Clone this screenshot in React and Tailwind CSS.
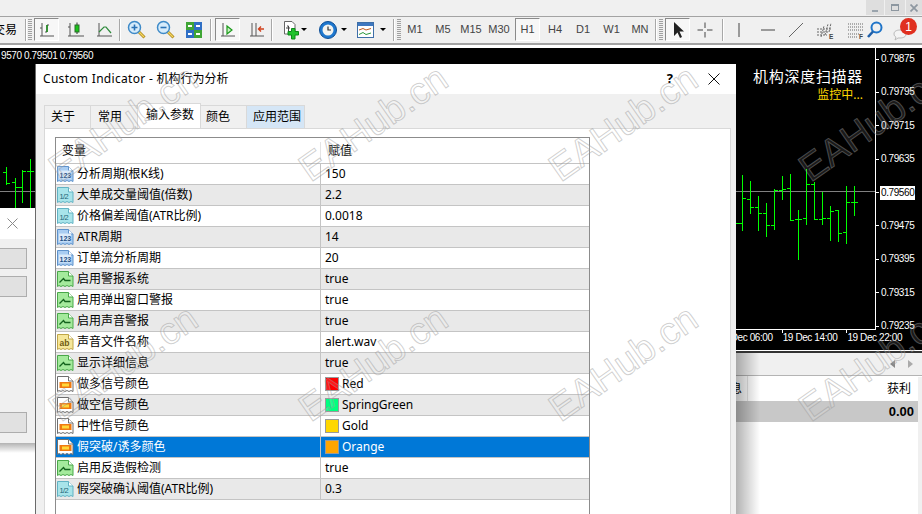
import React from "react";

const cjk = "font-['Noto_Sans','Noto_Sans_CJK_SC',sans-serif]";
const small = "font-['Liberation_Sans',sans-serif] text-[10px] tracking-[-0.4px] leading-[14px] whitespace-nowrap";

const params = [
  ["int", "分析周期(根K线)", "150"],
  ["dbl", "大单成交量阈值(倍数)", "2.2"],
  ["dbl", "价格偏差阈值(ATR比例)", "0.0018"],
  ["int", "ATR周期", "14"],
  ["int", "订单流分析周期", "20"],
  ["bool", "启用警报系统", "true"],
  ["bool", "启用弹出窗口警报", "true"],
  ["bool", "启用声音警报", "true"],
  ["str", "声音文件名称", "alert.wav"],
  ["bool", "显示详细信息", "true"],
  ["color", "做多信号颜色", "Red", "bg-[#ff0000]"],
  ["color", "做空信号颜色", "SpringGreen", "bg-[#00ff7f]"],
  ["color", "中性信号颜色", "Gold", "bg-[#ffd700]"],
  ["color", "假突破/诱多颜色", "Orange", "bg-[#ffa500]"],
  ["bool", "启用反造假检测", "true"],
  ["dbl", "假突破确认阈值(ATR比例)", "0.3"],
];

const prices = ["0.79875", "0.79795", "0.79715", "0.79635", "0.79560", "0.79475", "0.79395", "0.79315", "0.79235"];

// x, high, low, open, close
const bars = [
  [742, 175, 231, 223, 198],
  [750, 181, 214, 199, 207],
  [758, 196, 231, 207, 213],
  [766, 203, 237, 213, 225],
  [774, 189, 230, 225, 190],
  [782, 176, 200, 190, 189],
  [790, 174, 221, 188, 220],
  [798, 210, 260, 219, 219],
  [806, 169, 225, 218, 184],
  [814, 182, 220, 184, 219],
  [822, 192, 225, 219, 218],
  [830, 206, 241, 218, 211],
  [838, 210, 242, 210, 233],
  [846, 186, 244, 232, 202],
  [854, 186, 216, 202, 202],
  [6, 167, 185, 172, 183],
  [15, 178, 208, 182, 187],
  [22, 170, 203, 187, 171],
  [30, 159, 208, 171, 171],
];

const watermarks = [
  "left-[28px] top-[100px]",
  "left-[278px] top-[100px]",
  "left-[528px] top-[100px]",
  "left-[778px] top-[100px]",
  "left-[28px] top-[340px]",
  "left-[278px] top-[340px]",
  "left-[528px] top-[340px]",
  "left-[778px] top-[340px]",
];

function ParamIcon({ type }) {
  const look = {
    int: ["#a9cdf2", "#5f93cc"],
    dbl: ["#a8e4ea", "#62b3c4"],
    bool: ["#a4ea9c", "#4aa84a"],
    str: ["#f6e79a", "#c0a648"],
    color: ["#ffffff", "#6f6f6f"],
  }[type];
  return (
    <svg width="17" height="17" viewBox="0 0 17 17" className="shrink-0">
      <path
        d="M.5 .5H11.5L16 5V15.5L14 14.5 12 15.5 10 14.5 8 15.5 6 14.5 4 15.5 2 14.5 .5 15.5Z"
        fill={look[0]}
        stroke={look[1]}
      />
      <path d="M11.5 .5V5H16" fill="#fff" stroke={look[1]} />
      {type === "int" && (
        <>
          <rect x="2" y="4.5" width="12" height="8" fill="#dcebfa" />
          <text x="2.5" y="11.5" fontSize="7" fontWeight="700" fill="#1d4f86" fontFamily="Liberation Sans">123</text>
        </>
      )}
      {type === "dbl" && (
        <text x="2.5" y="11.5" fontSize="7.5" letterSpacing="-0.6" fill="#1d6478" fontFamily="Liberation Sans">1/2</text>
      )}
      {type === "bool" && <path d="M2.5 11.5L6.5 7.5 8 9.5H13.5" fill="none" stroke="#14641e" strokeWidth="1.3" />}
      {type === "str" && <text x="2.5" y="11.5" fontSize="8.5" fontWeight="700" fill="#6e5a10" fontFamily="Liberation Sans">ab</text>}
      {type === "color" && (
        <>
          <rect x="2.5" y="6" width="12" height="6" fill="#f07a10" />
          <rect x="5" y="7.5" width="7" height="3" fill="#ffd83a" />
        </>
      )}
    </svg>
  );
}

function Separator() {
  return <div className="w-[2px] h-[22px] shrink-0 bg-[#a8a8a8] border-r border-white" />;
}

function Handle() {
  return <div className="w-[4px] h-[22px] shrink-0 bg-[repeating-linear-gradient(#a0a0a0_0_1px,#f0f0f0_1px_2px)]" />;
}

function Tool({ className, checked, children }) {
  return (
    <div
      className={`${className} h-[23px] shrink-0 flex items-center justify-center ${
        checked ? "border border-t-[#8a8a8a] border-l-[#8a8a8a] border-r-white border-b-white bg-[#f7f7f7]" : ""
      }`}
    >
      {children}
    </div>
  );
}

function Caret() {
  return <div className="ml-auto mr-[1px] w-0 h-0 border-x-[3px] border-x-transparent border-t-[3px] border-t-black" />;
}

function Glyph({ children }) {
  return (
    <svg width="20" height="20" viewBox="0 0 20 20" fill="none" className="shrink-0">
      {children}
    </svg>
  );
}

function Period({ label, className = "w-[28px]", checked }) {
  return (
    <Tool className={className} checked={checked}>
      <span className="font-['Liberation_Sans',sans-serif] text-[11px] text-[#444]">{label}</span>
    </Tool>
  );
}

function Magnifier({ minus }) {
  return (
    <Glyph>
      <path d="M11 11L17.5 17.5" stroke="#b08a20" strokeWidth="3" />
      <path d="M11.5 11.5L17 17" stroke="#f5d860" strokeWidth="1.2" />
      <circle cx="7.5" cy="7.5" r="6" fill="#d6ecfb" stroke="#3e8ac8" strokeWidth="1.5" />
      <path d={minus ? "M4.5 7.5H10.5" : "M4.5 7.5H10.5M7.5 4.5V10.5"} stroke="#2a72b5" strokeWidth="1.6" />
    </Glyph>
  );
}

function Toolbar() {
  return (
    <div className="h-[28px] shrink-0 flex items-center bg-[#f0f0f0] border-b-2 border-[#a3a3a3] pb-[1px]">
      <div className={`w-[25px] shrink-0 flex justify-end overflow-hidden pr-2 ${cjk} text-[12px] text-black`}>
        <span className="whitespace-nowrap">交易</span>
      </div>
      <Separator />
      <div className="ml-[1px]"><Handle /></div>
      <Tool className="w-[25px] ml-[2px]" checked>
        <Glyph>
          <path d="M5 3V16M3 16H17M5 8H3M10 5V12M10 5H12M10 12H8" stroke="#555" />
          <path d="M10 5V12" stroke="#0a8a0a" strokeWidth="1.4" />
        </Glyph>
      </Tool>
      <Tool className="w-[28px] ml-[4px]">
        <Glyph>
          <path d="M3 3V16M1 16H17M3 7H1" stroke="#555" />
          <path d="M10 2.5V14" stroke="#333" />
          <rect x="8" y="5" width="4" height="7" fill="#19c419" stroke="#2a6a2a" />
        </Glyph>
      </Tool>
      <Tool className="w-[27px]">
        <Glyph>
          <path d="M4 3V16M2 16H17" stroke="#555" />
          <path d="M4 12L9 7 11 7 16 13" stroke="#2d8a3a" strokeWidth="1.2" />
        </Glyph>
      </Tool>
      <div className="ml-[1px]"><Separator /></div>
      <Tool className="w-[28px] ml-[2px]"><Magnifier /></Tool>
      <Tool className="w-[29px]"><Magnifier minus /></Tool>
      <Tool className="w-[27px]">
        <Glyph>
          <rect x="2" y="2" width="8" height="8" fill="#3fa535" />
          <rect x="10" y="2" width="8" height="8" fill="#2f6fc5" />
          <rect x="2" y="10" width="8" height="8" fill="#2f6fc5" />
          <rect x="10" y="10" width="8" height="8" fill="#3fa535" />
          <path d="M4 6H8M12 6H16M4 14H8M12 14H16" stroke="#fff" strokeWidth="2" />
        </Glyph>
      </Tool>
      <div className="ml-[3px]"><Separator /></div>
      <Tool className="w-[25px] ml-[3px]" checked>
        <Glyph>
          <path d="M5 3V16M3 16H17" stroke="#555" />
          <path d="M9 6L14 10 9 14Z" fill="#c8f0c0" stroke="#1b9a1b" strokeWidth="1.2" />
        </Glyph>
      </Tool>
      <Tool className="w-[28px] ml-[3px]">
        <Glyph>
          <path d="M5 3V16M3 16H17M9 3V16" stroke="#555" />
          <path d="M17 9H12M14 6.5L11.5 9 14 11.5" stroke="#d0401c" strokeWidth="1.4" />
        </Glyph>
      </Tool>
      <Separator />
      <Tool className="w-[27px] ml-[8px]">
        <div className="flex items-center w-full">
          <Glyph>
            <path d="M3.5 1.5H11L14 4.5V14H3.5Z" fill="#fff" stroke="#666" />
            <path d="M6 6H7.5V11M5 8H9" stroke="#444" />
            <path d="M10.5 8.5H14V11.5H17.5V15H14V19H10.5V15H7V11.5H10.5Z" fill="#1fc22c" stroke="#0d8a1a" />
          </Glyph>
          <Caret />
        </div>
      </Tool>
      <Tool className="w-[30px] ml-[10px]">
        <div className="flex items-center w-full">
          <Glyph>
            <circle cx="10" cy="10" r="8.5" fill="#1f78cf" stroke="#0f4f96" />
            <circle cx="10" cy="10" r="5.5" fill="#f4f4f0" />
            <path d="M10 6.5V10H13" stroke="#333" strokeWidth="1.2" />
          </Glyph>
          <Caret />
        </div>
      </Tool>
      <Tool className="w-[31px] ml-[8px]">
        <div className="flex items-center w-full">
          <Glyph>
            <rect x="1.5" y="2.5" width="16" height="15" fill="#fff" stroke="#3e6fa8" />
            <rect x="2" y="3" width="15" height="3" fill="#3f78c0" />
            <path d="M3 10L7 8.5 10 10 15 8.5" stroke="#c05a1e" />
            <path d="M3 14.5L7 12.5 10 14.5 15 13" stroke="#2c9a3c" />
          </Glyph>
          <Caret />
        </div>
      </Tool>
      <div className="ml-[6px]"><Separator /></div>
      <div className="ml-[2px]"><Handle /></div>
      <Period label="M1" />
      <Period label="M5" />
      <Period label="M15" />
      <Period label="M30" />
      <Period label="H1" className="w-[25px] ml-[2px]" checked />
      <Period label="H4" className="w-[28px] ml-[1px]" />
      <Period label="D1" />
      <Period label="W1" className="w-[29px]" />
      <Period label="MN" />
      <div className="ml-[1px]"><Separator /></div>
      <div className="ml-[2px]"><Handle /></div>
      <Tool className="w-[25px] ml-[2px]" checked>
        <Glyph>
          <path d="M6 2V16L9.5 12.5 12 18 14 17 11.5 11.5H16Z" fill="#222" />
        </Glyph>
      </Tool>
      <Tool className="w-[30px]">
        <Glyph>
          <path d="M2.5 10H8M12 10H17.5M10 2.5V8M10 12V17.5" stroke="#444" />
        </Glyph>
      </Tool>
      <div className="ml-[2px]"><Separator /></div>
      <Tool className="w-[30px]">
        <Glyph><path d="M10 3V17" stroke="#444" /></Glyph>
      </Tool>
      <Tool className="w-[28px]">
        <Glyph><path d="M3 10H17" stroke="#444" /></Glyph>
      </Tool>
      <Tool className="w-[28px]">
        <Glyph><path d="M3 17L17 3" stroke="#666" /></Glyph>
      </Tool>
      <Tool className="w-[30px] ml-[1px]">
        <Glyph>
          <path d="M1 9H15M1 12H13M1 15H11M5 17L8 6M9 15L12 4M13 12L15 3" stroke="#666" strokeDasharray="2 1" />
          <text x="13" y="19" fontSize="6.5" fontWeight="700" fill="#444" fontFamily="Liberation Sans">E</text>
        </Glyph>
      </Tool>
      <Tool className="w-[30px]">
        <Glyph>
          <path d="M2 4H17M2 7H17M2 10H17M2 14H13M2 17H12" stroke="#666" strokeDasharray="1 1" />
          <text x="13" y="19" fontSize="6.5" fontWeight="700" fill="#444" fontFamily="Liberation Sans">F</text>
        </Glyph>
      </Tool>
      <Tool className="w-[20px] -ml-[6px]">
        <Glyph>
          <circle cx="11.5" cy="7.5" r="5" stroke="#1f74c8" strokeWidth="2" />
          <path d="M8 11.5L3 17" stroke="#1f5fa8" strokeWidth="2.6" />
        </Glyph>
      </Tool>
      <div className="relative ml-[8px] w-[24px] h-[23px] shrink-0">
        <svg width="14" height="12" viewBox="0 0 14 12" className="absolute left-0 bottom-0">
          <path d="M1 5C1 2 4 1 7 1S13 2 13 5 10 9 7 9H5L2 11 3 8C2 7.5 1 6.5 1 5Z" fill="#f4f4f4" stroke="#bbb" />
        </svg>
        <div className="absolute left-[7px] top-0 w-[17px] h-[17px] rounded-full bg-[#e03020] flex items-center justify-center font-['Liberation_Sans',sans-serif] text-[12px] text-white">
          1
        </div>
      </div>
    </div>
  );
}

function Chart() {
  return (
    <div className="relative h-[302px] shrink-0 mt-[3px] bg-black">
      <svg width="922" height="302" viewBox="0 48 922 302" className="absolute inset-0">
        <path d="M0 191.5H875" stroke="#808080" />
        <path d="M736 223.5H742" stroke="#00ff00" />
        {bars.map(([x, high, low, open, close]) => (
          <g key={x} stroke="#00ff00" strokeWidth="1">
            <path d={`M${x + 0.5} ${high}V${low}`} />
            <path d={`M${x - 3} ${open + 0.5}H${x}M${x + 1} ${close + 0.5}H${x + 4}`} />
          </g>
        ))}
        <path d="M782.5 330V333M846.5 330V333" stroke="#fff" />
      </svg>
      <div className="relative flex h-[282px]">
        <div className={`flex-1 border-r border-b border-white pl-[1px] pt-[1px] ${small} text-white`}>
          9570 0.79501 0.79560
        </div>
        <div className="w-[46px] shrink-0 flex flex-col justify-between pt-[4px] -mb-[3px]">
          {prices.map((p) => (
            <div key={p} className="flex items-center h-[14px]">
              <div className="w-[3px] h-px bg-white" />
              <span className={`ml-[1px] pl-[1px] w-[35px] ${small} ${p === "0.79560" ? "bg-white text-black" : "text-white"}`}>
                {p}
              </span>
            </div>
          ))}
        </div>
      </div>
      <div className={`relative flex gap-[10px] pl-[718px] pt-[1px] ${small} text-white`}>
        <span>19 Dec 06:00</span>
        <span>19 Dec 14:00</span>
        <span>19 Dec 22:00</span>
      </div>
    </div>
  );
}

function Terminal() {
  return (
    <div className="relative flex-1 flex flex-col pl-[736px] border-t-2 border-t-[#333] mt-[1px]">
      <div className="h-[23px] shrink-0 flex items-center justify-end gap-[13px] pr-[9px] bg-[#f0f0f0] border-b border-[#b4b4b4]">
        <div className="w-0 h-0 border-y-[4px] border-y-transparent border-r-[5px] border-r-[#888]" />
        <div className="w-0 h-0 border-y-[4px] border-y-transparent border-l-[5px] border-l-[#aaa]" />
      </div>
      <div className="flex-1 mr-[4px] flex flex-col bg-white">
        <div className={`h-[25px] shrink-0 flex items-center ${cjk} text-[12px] text-black`}>
          <div className="w-[12px] h-full pr-[5px] border-r border-[#e4e4e4] overflow-hidden flex items-center justify-end">
            <span className="whitespace-nowrap shrink-0">息</span>
          </div>
          <span className="ml-auto mr-[7px]">获利</span>
        </div>
        <div className="h-[21px] shrink-0 flex items-center justify-end pr-[4px] bg-[#c8c8c8] font-['Liberation_Sans',sans-serif] font-bold text-[13px] text-black">
          0.00
        </div>
      </div>
      <div className="absolute left-[736px] top-0 bottom-0 w-[24px] bg-gradient-to-r from-black/30 to-transparent" />
      <div className="absolute right-0 top-[24px] bottom-0 w-[4px] bg-[#f0f0f0]" />
    </div>
  );
}

function BackDialog() {
  return (
    <>
      <div className="absolute left-0 top-[208px] w-[35px] h-[235px] flex flex-col bg-[#f0f0f0]">
        <div className="h-[31px] shrink-0 bg-white flex items-center pl-[7px]">
          <svg width="11" height="11" viewBox="0 0 11 11">
            <path d="M.5 .5L10.5 10.5M10.5 .5L.5 10.5" stroke="#8a8a8a" />
          </svg>
        </div>
        <div className="mt-[9px] w-[27px] h-[21px] bg-[#e1e1e1] border border-l-0 border-[#adadad]" />
        <div className="mt-[7px] w-[27px] h-[21px] bg-[#e1e1e1] border border-l-0 border-[#adadad]" />
        <div className="mt-[115px] w-[27px] h-[21px] bg-[#e1e1e1] border border-l-0 border-[#adadad]" />
      </div>
      <div className="absolute left-0 top-[443px] w-[35px] h-[71px] bg-white">
        <div className="h-[10px] bg-gradient-to-b from-black/30 to-transparent" />
      </div>
    </>
  );
}

function Tab({ className, children }) {
  return (
    <div className={`${className} h-[23px] shrink-0 flex items-center border-t border-r border-[#d9d9d9] ${cjk} text-[12px] text-black`}>
      {children}
    </div>
  );
}

function Row({ row, index }) {
  const [type, name, value, swatch] = row;
  const selected = name === "假突破/诱多颜色";
  const tone = selected ? "bg-[#0078d7] text-white" : index % 2 ? "bg-[#e9e9e9] text-black" : "bg-white text-black";
  return (
    <div className={`h-[21px] shrink-0 flex border-b border-[#c4c4c4] ${tone}`}>
      <div className="w-[265px] shrink-0 flex items-center gap-[3px] pl-[1px] border-r border-[#c4c4c4]">
        <ParamIcon type={type} />
        <span className="whitespace-nowrap">{name}</span>
      </div>
      <div className="flex-1 flex items-center gap-[3px] pl-[4px] whitespace-nowrap">
        {swatch && <div className={`w-[14px] h-[14px] shrink-0 border border-[#9a9a9a] ${swatch}`} />}
        <span>{value}</span>
      </div>
    </div>
  );
}

function IndicatorDialog() {
  return (
    <div className={`absolute left-[35px] top-[64px] w-[701px] h-[450px] flex flex-col bg-[#f0f0f0] border-l border-[#6a6a6a] ${cjk} text-[12px] text-black`}>
      <div className="h-[30px] shrink-0 flex items-center bg-white pl-[7px]">
        <span className="tracking-[0.3px]">Custom Indicator -&nbsp;</span>
        <span>机构行为分析</span>
        <span className="ml-auto font-bold text-[13px]">?</span>
        <svg width="12" height="12" viewBox="0 0 12 12" className="ml-[35px] mr-[16px]">
          <path d="M.5 .5L11.5 11.5M11.5 .5L.5 11.5" stroke="#111" />
        </svg>
      </div>
      <div className="flex h-[34px] shrink-0 items-end pl-[8px]">
        <Tab className="w-[47px] pl-[6px] border-l">关于</Tab>
        <Tab className="w-[47px] pl-[7px]">常用</Tab>
        <Tab className="w-[63px] pl-[8px] !h-[25px] pb-[3px] bg-white">输入参数</Tab>
        <Tab className="w-[46px] pl-[5px]">颜色</Tab>
        <Tab className="w-[58px] pl-[6px] bg-[#d5e6f6]">应用范围</Tab>
      </div>
      <div className="flex-1 min-h-0 ml-[8px] mr-[5px] pt-[8px] pl-[11px] bg-white border-t border-l border-r border-[#d9d9d9] overflow-hidden">
        <div className="w-[535px] h-[400px] -ml-[1px] flex flex-col border border-b-0 border-[#8c8c8c]">
          <div className="h-[26px] shrink-0 flex items-center bg-white border-b border-[#c4c4c4]">
            <span className="w-[265px] shrink-0 pl-[6px] border-r border-[#e4e4e4]">变量</span>
            <span className="pl-[7px]">赋值</span>
          </div>
          {params.map((row, i) => (
            <Row key={row[1]} row={row} index={i} />
          ))}
        </div>
      </div>
    </div>
  );
}

export default function App() {
  return (
    <div className="relative w-[922px] h-[514px] overflow-hidden flex flex-col bg-white">
      <div className="h-[17px] shrink-0 flex justify-end bg-[#f0f0f0] border-b border-[#a3a3a3]">
        <div className="w-[18px] h-[15px] mr-[1px] bg-[#dedede] flex items-end justify-center pb-[3px]">
          <div className="w-[6px] h-[2px] bg-[#9aa4ad]" />
        </div>
        <div className="w-[20px] h-[15px] mr-[1px] bg-[#dedede] flex items-center justify-center">
          <div className="relative w-[8px] h-[7px] border border-t-2 border-[#8d97a0] bg-[#dedede]" />
        </div>
        <div className="w-[16px] h-[15px] bg-[#dedede] flex items-center justify-center">
          <svg width="8" height="8" viewBox="0 0 8 8">
            <path d="M.5 .5L7.5 7.5M7.5 .5L.5 7.5" stroke="#8d97a0" strokeWidth="1.7" />
          </svg>
        </div>
      </div>
      <Toolbar />
      <Chart />
      <Terminal />

      <div className={`absolute right-[59px] top-[66px] flex flex-col items-end ${cjk}`}>
        <span className="text-[15px] leading-[20px] tracking-[0.7px] text-white">机构深度扫描器</span>
        <span className="text-[12px] leading-[16px] mt-[1px] text-[#ffd700]">监控中...</span>
      </div>

      <BackDialog />
      <IndicatorDialog />

      {watermarks.map((place) => (
        <span
          key={place}
          className={`absolute ${place} w-[190px] text-center -rotate-[35deg] pointer-events-none font-['Liberation_Sans',sans-serif] text-[38px] leading-[46px] whitespace-nowrap text-white/10 [-webkit-text-stroke:1px_rgba(150,150,150,0.45)]`}
        >
          EAHub.cn
        </span>
      ))}
    </div>
  );
}
